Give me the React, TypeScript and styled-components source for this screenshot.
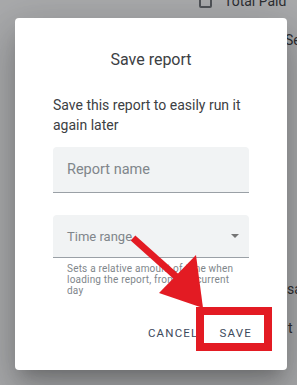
import styled, { createGlobalStyle } from "styled-components";
import { FunctionComponent } from "react";

const GlobalStyle = createGlobalStyle`
  html, body {
    margin: 0;
    padding: 0;
  }
  body {
    width: 297px;
    height: 385px;
    overflow: hidden;
    background: #fff;
    font-family: Roboto, "Liberation Sans", Arial, sans-serif;
  }
`;

const Screen = styled.div`
  position: relative;
  width: 297px;
  height: 385px;
  overflow: hidden;
`;

const BackPage = styled.div`
  display: flex;
  flex-direction: column;
  padding-left: 199px;
  color: #202124;
  font-size: 14px;
`;

const CheckRow = styled.div`
  display: flex;
  align-items: center;
  gap: 12px;
  height: 20px;
  margin-top: -9px;
`;

const CheckBox = styled.div`
  width: 13px;
  height: 13px;
  box-sizing: border-box;
  border: 2px solid #5f6368;
  border-radius: 2px;
`;

const BackText = styled.div<{ $indent: number; $gap: number }>`
  margin-left: ${(p) => p.$indent}px;
  margin-top: ${(p) => p.$gap}px;
  line-height: 20px;
  white-space: nowrap;
`;

const Scrim = styled.div`
  position: absolute;
  inset: 0;
  background: rgba(60, 64, 67, 0.445);
`;

const Dialog = styled.div`
  position: absolute;
  left: 15px;
  top: 18px;
  width: 272px;
  height: 352px;
  box-sizing: border-box;
  padding: 30px 38px 19px;
  display: flex;
  flex-direction: column;
  background: #fff;
  border-radius: 4px;
  box-shadow: 0 11px 15px -7px rgba(0, 0, 0, 0.2),
    0 24px 38px 3px rgba(0, 0, 0, 0.14), 0 9px 46px 8px rgba(0, 0, 0, 0.12);
`;

const Title = styled.h2`
  margin: 0;
  font-size: 16px;
  font-weight: 400;
  line-height: 24px;
  text-align: center;
  color: #3c4043;
`;

const Description = styled.p`
  margin: 23px 0 0;
  font-size: 14px;
  line-height: 20px;
  color: #3c4043;
`;

const FieldBox = styled.div<{ $top: number; $height: number; $size: number }>`
  margin-top: ${(p) => p.$top}px;
  height: ${(p) => p.$height}px;
  box-sizing: border-box;
  display: flex;
  align-items: center;
  justify-content: space-between;
  padding: 0 10px 0 14px;
  background: #f1f3f4;
  border-radius: 4px 4px 0 0;
  border-bottom: 1px solid #9aa0a6;
  font-size: ${(p) => p.$size}px;
  color: #80868b;
`;

const Caret = styled.span`
  width: 0;
  height: 0;
  border-left: 4px solid transparent;
  border-right: 4px solid transparent;
  border-top: 4px solid #757575;
`;

const Helper = styled.div`
  margin-top: 5px;
  padding: 0 8px 0 14px;
  font-size: 10px;
  line-height: 11px;
  letter-spacing: 0.2px;
  color: #80868b;
`;

const Actions = styled.div`
  margin-top: auto;
  margin-right: -11px;
  display: flex;
  justify-content: flex-end;
  gap: 5px;
`;

const TextButton = styled.button`
  height: 36px;
  padding: 0 8px;
  border: none;
  background: none;
  font-family: inherit;
  font-size: 11.5px;
  font-weight: 400;
  letter-spacing: 1.2px;
  text-transform: uppercase;
  color: #3d4a5c;
  cursor: pointer;
`;

const Annotation = styled.svg`
  position: absolute;
  inset: 0;
  pointer-events: none;
`;

const Field: FunctionComponent<{
  label: string;
  top: number;
  height: number;
  size: number;
  select?: boolean;
}> = ({ label, top, height, size, select }) => {
  return (
    <FieldBox $top={top} $height={height} $size={size}>
      <span>{label}</span>
      {select && <Caret />}
    </FieldBox>
  );
};

const App = () => {
  return (
    <Screen>
      <GlobalStyle />
      <BackPage>
        <CheckRow>
          <CheckBox />
          <span>Total Paid</span>
        </CheckRow>
        <BackText $indent={86} $gap={19}>
          Ser
        </BackText>
        <BackText $indent={88} $gap={229}>
          sa
        </BackText>
        <BackText $indent={89} $gap={19}>
          t
        </BackText>
      </BackPage>
      <Scrim />
      <Dialog>
        <Title>Save report</Title>
        <Description>Save this report to easily run it again later</Description>
        <Field label="Report name" top={12} height={46} size={14.5} />
        <Field label="Time range" top={22} height={43} size={13} select />
        <Helper>
          Sets a relative amount of time when loading the report, from the
          current day
        </Helper>
        <Actions>
          <TextButton>Cancel</TextButton>
          <TextButton>Save</TextButton>
        </Actions>
      </Dialog>
      <Annotation width={297} height={385} viewBox="0 0 297 385">
        <line
          x1={133}
          y1={238}
          x2={180}
          y2={280}
          stroke="#e31b23"
          strokeWidth={7}
        />
        <polygon points="203,308 159,293 196,255" fill="#e31b23" />
        <rect
          x={200}
          y={311}
          width={68}
          height={36}
          fill="none"
          stroke="#e31b23"
          strokeWidth={8}
        />
      </Annotation>
    </Screen>
  );
};

export default App;
